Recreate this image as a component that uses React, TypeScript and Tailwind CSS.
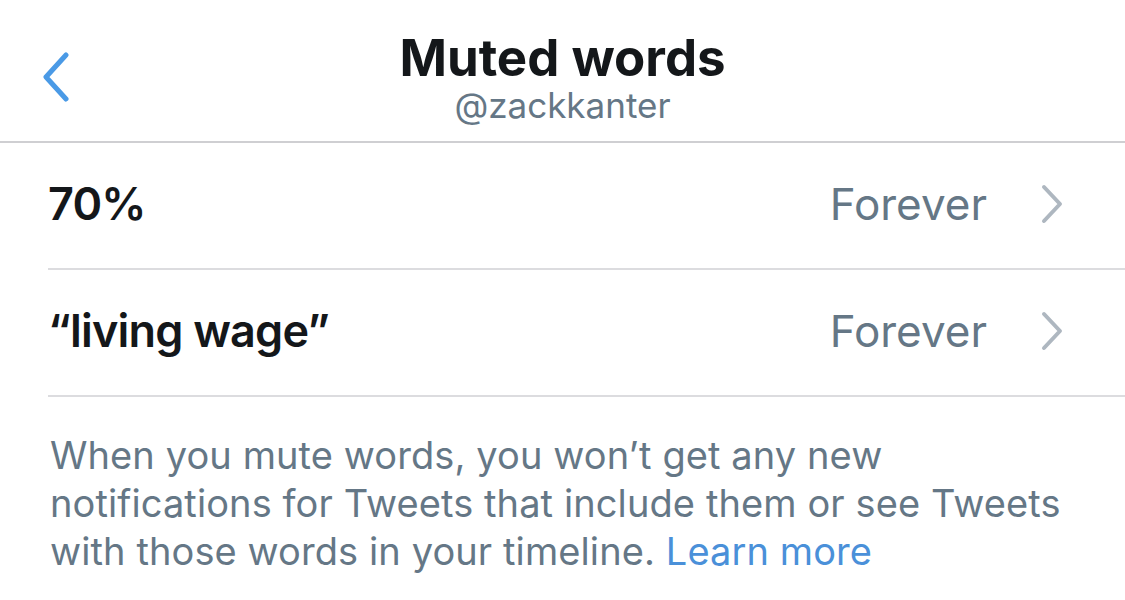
import React from 'react'

const rows = [
  { word: '70%', duration: 'Forever' },
  { word: '\u201Cliving wage\u201D', duration: 'Forever' },
]

function BackChevron() {
  return (
    <svg width="34" height="50" viewBox="0 0 34 50" fill="none">
      <path d="M28 3 L8 25 L28 47" stroke="#4a9ae6" strokeWidth="5" strokeLinecap="round" strokeLinejoin="round" />
    </svg>
  )
}

function RowChevron() {
  return (
    <svg width="26" height="40" viewBox="0 0 26 40" fill="none">
      <path d="M5 3 L21 20 L5 37" stroke="#aeb7c0" strokeWidth="4" strokeLinecap="round" strokeLinejoin="round" />
    </svg>
  )
}

export default function App() {
  return (
    <div className="w-[1125px] h-[600px] bg-white overflow-hidden" style={{ fontFamily: 'Inter, "Liberation Sans", sans-serif' }}>
      {/* Nav bar */}
      <header className="relative h-[143px] border-b-2 border-[#cfcfd2] flex flex-col items-center pt-[31px]">
        <div className="absolute left-[38px] top-[52px]">
          <BackChevron />
        </div>
        <h1 className="text-[51px] leading-[54px] font-bold text-[#14171a]">Muted words</h1>
        <p className="text-[35px] leading-[40px] text-[#657786]">@zackkanter</p>
      </header>

      {/* Muted words list */}
      <ul className="pl-[48px]">
        {rows.map(row => (
          <li key={row.word} className="h-[127px] flex items-center border-b-2 border-[#dcdcdf] pr-[60px] pb-[4px]">
            <span className="flex-1 text-[45px] font-semibold text-[#14171a] tracking-[-0.8px]">{row.word}</span>
            <span className="text-[44px] text-[#657786] mr-[52px]">{row.duration}</span>
            <RowChevron />
          </li>
        ))}
      </ul>

      {/* Footer note */}
      <p className="px-[50px] pt-[34px] text-[38px] leading-[48px] text-[#657786] tracking-[0.1px]">
        When you mute words, you won’t get any new notifications for Tweets that include them or see Tweets
        with those words in your timeline. <span className="text-[#4a90d9]">Learn more</span>
      </p>
    </div>
  )
}
